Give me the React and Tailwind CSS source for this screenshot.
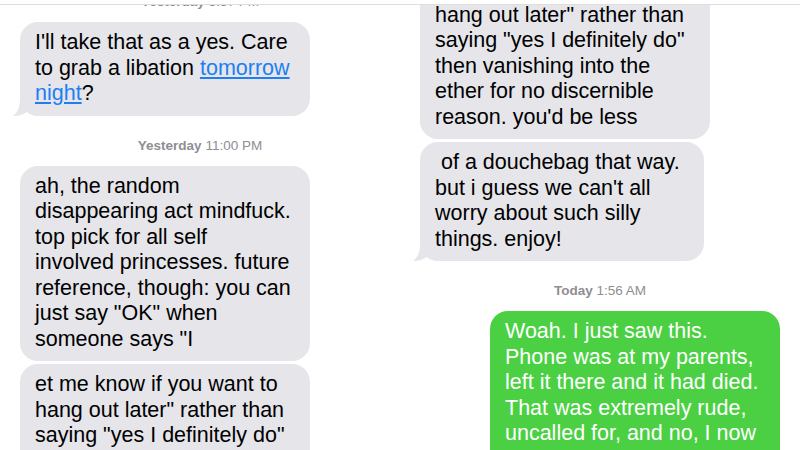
import React from 'react';

const GRAY = 'bg-[#e5e5ea]';

const Tail = () => (
    <svg className="absolute left-[-7px] bottom-0" width="16" height="18" viewBox="0 0 16 18">
        <path d="M7 0 C7 9 5 14 0 18 C6 18 11 16.5 15 13 L15 0 Z" fill="#e5e5ea" />
    </svg>
);

const Stamp = ({ day, time, first }) => (
    <div
        className={`text-center text-[13.5px] leading-[16px] text-[#8e8e93] ${
            first ? 'mt-[-11px] mb-[12px]' : 'mt-[22px] mb-[12px]'
        }`}
    >
        <span className="font-bold">{day}</span> {time}
    </div>
);

const Bubble = ({ lines, width, green, tail, className = '' }) => (
    <div
        className={`relative rounded-[18px] pl-[15px] pt-[8px] pb-[9px] text-[21.5px] leading-[25.5px] ${
            green ? 'bg-[#4bd044] text-white' : `${GRAY} text-black`
        } ${className}`}
        style={{ width }}
    >
        {tail && <Tail />}
        {lines.map((line, i) => (
            <div key={i} className="whitespace-pre">
                {line}
            </div>
        ))}
    </div>
);

const Link = ({ children }) => <span className="text-[#1d7ff2] underline underline-offset-2">{children}</span>;

export default function App() {
    return (
        <div className="w-[800px] h-[450px] bg-white overflow-hidden flex flex-col font-['Liberation_Sans',Arial,sans-serif]">
            <div className="h-[5px] shrink-0 bg-white border-b border-[#dedede]" />
            <div className="flex flex-1 min-h-0">
                {/* left column */}
                <div className="w-[400px] overflow-hidden">
                    <div className="flex flex-col">
                        <Stamp day="Yesterday" time="3:57 PM" first />
                        <Bubble
                            width={290}
                            tail
                            className="ml-[20px]"
                            lines={[
                                "I'll take that as a yes. Care",
                                <>to grab a libation <Link>tomorrow</Link></>,
                                <><Link>night</Link>?</>,
                            ]}
                        />
                        <Stamp day="Yesterday" time="11:00 PM" />
                        <Bubble
                            width={290}
                            className="ml-[20px]"
                            lines={[
                                'ah, the random',
                                'disappearing act mindfuck.',
                                'top pick for all self',
                                'involved princesses. future',
                                'reference, though: you can',
                                'just say "OK" when',
                                'someone says "I',
                            ]}
                        />
                        <Bubble
                            width={290}
                            className="ml-[20px] mt-[3px]"
                            lines={[
                                'et me know if you want to',
                                'hang out later" rather than',
                                'saying "yes I definitely do"',
                                'then vanishing into the',
                            ]}
                        />
                    </div>
                </div>

                {/* right column */}
                <div className="w-[400px] overflow-hidden">
                    <div className="flex flex-col mt-[-36px]">
                        <Bubble
                            width={290}
                            className="ml-[20px]"
                            lines={[
                                'et me know if you want to',
                                'hang out later" rather than',
                                'saying "yes I definitely do"',
                                'then vanishing into the',
                                'ether for no discernible',
                                "reason. you'd be less",
                            ]}
                        />
                        <Bubble
                            width={284}
                            tail
                            className="ml-[20px] mt-[3px]"
                            lines={[
                                ' of a douchebag that way.',
                                "but i guess we can't all",
                                'worry about such silly',
                                'things. enjoy!',
                            ]}
                        />
                        <Stamp day="Today" time="1:56 AM" />
                        <Bubble
                            width={290}
                            green
                            className="ml-[90px] pb-[30px]"
                            lines={[
                                'Woah. I just saw this.',
                                'Phone was at my parents,',
                                'left it there and it had died.',
                                'That was extremely rude,',
                                'uncalled for, and no, I now',
                            ]}
                        />
                    </div>
                </div>
            </div>
        </div>
    );
}
